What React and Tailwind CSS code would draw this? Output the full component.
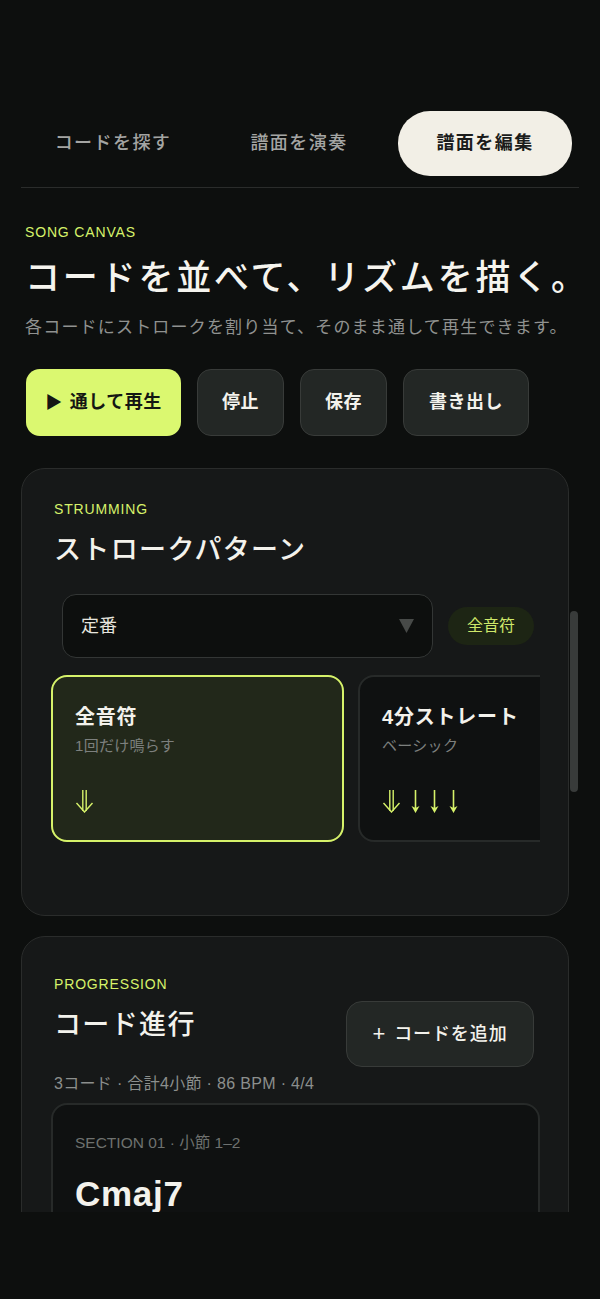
import { useState } from 'react'

const FONT = "font-['Liberation_Sans','Noto_Sans_CJK_JP',sans-serif]"

function DoubleArrow() {
  return (
    <svg width="19" height="24" viewBox="0 0 19 24" fill="none" stroke="#d6f26a" strokeWidth="1.4">
      <path d="M7.8 1v21M11.2 1v21" />
      <path d="M1.5 14l8 9 8-9" />
    </svg>
  )
}

function Arrow() {
  return (
    <svg width="9" height="25" viewBox="0 0 9 25" fill="none">
      <path d="M4.5 1v19" stroke="#d6f26a" strokeWidth="1.6" />
      <path d="M0.5 17l4 7 4-7-4 2z" fill="#d6f26a" />
    </svg>
  )
}

const patterns = [
  { name: '全音符', sub: '1回だけ鳴らす', strokes: ['D'] },
  { name: '4分ストレート', sub: 'ベーシック', strokes: ['D', 'd', 'd', 'd'] },
]

function PatternCard({ p, active }) {
  return (
    <div
      className={
        'shrink-0 w-[293px] h-[167px] rounded-[16px] px-[22px] pt-[26px] ' +
        (active ? 'bg-[#22281a] border-2 border-[#d6f26a]' : 'bg-[#0f1111] border-2 border-[#272a29]')
      }
    >
      <p className="text-[20px] font-semibold text-[#f3f2ec] leading-[28px] tracking-[0.04em]">{p.name}</p>
      <p className="mt-[4px] text-[15px] text-[#7d807e] leading-[22px] tracking-[0.02em]">{p.sub}</p>
      <div className="mt-[32px] flex items-start gap-[10px]">
        {p.strokes.map((s, i) => (s === 'D' ? <DoubleArrow key={i} /> : <Arrow key={i} />))}
      </div>
    </div>
  )
}

export default function App() {
  const [tab, setTab] = useState(2)
  const tabs = ['コードを探す', '譜面を演奏', '譜面を編集']

  return (
    <div className={`min-h-[1299px] bg-[#0d0f0e] ${FONT}`}>
      <div className="h-[1212px] overflow-hidden px-[21px] pt-[111px]">
        {/* tabs */}
        <div className="grid grid-cols-3 gap-[12px] pl-[5px] pr-[7px]">
          {tabs.map((t, i) => (
            <button
              key={t}
              onClick={() => setTab(i)}
              className={
                'h-[65px] rounded-[32px] text-[18px] font-medium tracking-[0.08em] ' +
                (tab === i ? 'bg-[#f2efe6] text-[#1b1c1b] font-semibold' : 'text-[#a4a5a3]')
              }
            >
              {t}
            </button>
          ))}
        </div>
        <div className="mt-[11px] h-px bg-[#2a2c2b]" />

        {/* hero */}
        <div className="px-[4px]">
          <p className="mt-[36px] text-[14px] leading-[16px] tracking-[0.06em] text-[#d6f26a]">SONG CANVAS</p>
          <h1 className="mt-[16px] text-[35px] leading-[44px] font-medium tracking-[0.08em] text-[#f5f4ee] whitespace-nowrap">
            コードを並べて、リズムを描く。
          </h1>
          <p className="mt-[16px] text-[17px] leading-[24px] tracking-[0.07em] text-[#909290] whitespace-nowrap">
            各コードにストロークを割り当て、そのまま通して再生できます。
          </p>
          <div className="mt-[29px] flex gap-[16px]">
            <button className="ml-px h-[67px] w-[155px] rounded-[14px] bg-[#dbf870] text-[#141613] text-[18px] font-semibold tracking-[0.03em] flex items-center justify-center gap-[7px]">
              <span className="text-[17px]">▶</span>通して再生
            </button>
            <button className="h-[67px] w-[87px] rounded-[14px] bg-[#232725] border border-[#383b39] text-[#f3f2ec] text-[18px] font-semibold tracking-[0.03em]">
              停止
            </button>
            <button className="h-[67px] w-[87px] rounded-[14px] bg-[#232725] border border-[#383b39] text-[#f3f2ec] text-[18px] font-semibold tracking-[0.03em]">
              保存
            </button>
            <button className="h-[67px] w-[126px] rounded-[14px] bg-[#232725] border border-[#383b39] text-[#f3f2ec] text-[18px] font-semibold tracking-[0.03em]">
              書き出し
            </button>
          </div>
        </div>

        {/* scroll area */}
        <div className="relative mt-[32px] pr-[10px]">
          <div className="absolute right-[1px] top-[143px] w-[8px] h-[181px] rounded-full bg-[#383b3a]" />

          {/* strumming */}
          <section className="rounded-[24px] bg-[#161818] border border-[#2a2c2b] pl-[29px] pr-[28px] pt-[32px] pb-[73px]">
            <p className="ml-[3px] text-[14px] leading-[16px] tracking-[0.06em] text-[#d6f26a]">STRUMMING</p>
            <h2 className="ml-[3px] mt-[16px] text-[27px] leading-[34px] font-medium tracking-[0.05em] text-[#f3f2ec]">
              ストロークパターン
            </h2>
            <div className="mt-[27px] pl-[11px] pr-[6px] flex items-center gap-[15px]">
              <div className="flex-1 h-[64px] rounded-[14px] bg-[#0d0f0e] border border-[#333635] flex items-center justify-between pl-[18px] pr-[18px]">
                <span className="text-[18px] text-[#e6e5df]">定番</span>
                <svg width="15" height="14" viewBox="0 0 15 14">
                  <path d="M0 0h15L7.5 14z" fill="#474a48" />
                </svg>
              </div>
              <span className="h-[38px] px-[19px] rounded-full bg-[#1d2514] text-[#cfe86a] text-[16px] flex items-center">全音符</span>
            </div>
            <div className="mt-[17px] flex gap-[14px] overflow-hidden">
              {patterns.map((p, i) => (
                <PatternCard key={p.name} p={p} active={i === 0} />
              ))}
            </div>
          </section>

          {/* progression */}
          <section className="mt-[20px] rounded-[24px] bg-[#161818] border border-[#2a2c2b] pl-[29px] pr-[28px] pt-[39px] pb-[40px]">
            <p className="ml-[3px] text-[14px] leading-[16px] tracking-[0.06em] text-[#d6f26a]">PROGRESSION</p>
            <div className="mt-[9px] pr-[6px] flex items-start justify-between">
              <h2 className="ml-[3px] mt-[7px] text-[27px] leading-[34px] font-medium tracking-[0.05em] text-[#f3f2ec]">コード進行</h2>
              <button className="h-[66px] w-[188px] rounded-[16px] bg-[#232725] border border-[#383b39] text-[#f3f2ec] text-[18px] font-medium tracking-[0.05em] flex items-center justify-center gap-[8px]">
                <span className="text-[22px] font-light leading-none">+</span>コードを追加
              </button>
            </div>
            <p className="ml-[3px] mt-[6px] text-[16px] leading-[22px] tracking-[0.02em] text-[#8c8f8d]">3コード · 合計4小節 · 86 BPM · 4/4</p>
            <div className="mt-[8px] rounded-[16px] bg-[#0f1111] border-2 border-[#272a29] px-[22px] pt-[27px] pb-[30px]">
              <p className="text-[15.5px] leading-[22px] text-[#6e716f]">SECTION 01 · 小節 1–2</p>
              <p className="mt-[20px] text-[35px] leading-[40px] font-bold tracking-[0.02em] text-[#f3f2ec]">
                Cmaj7
              </p>
            </div>
          </section>
        </div>
      </div>
    </div>
  )
}
